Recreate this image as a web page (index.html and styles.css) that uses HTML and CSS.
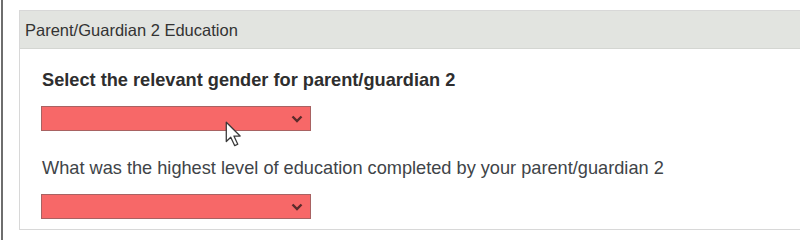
FILE: index.html
```html
<!DOCTYPE html>
<html lang="en">
<head>
  <meta charset="UTF-8">
  <title>Parent/Guardian 2 Education</title>
  <link rel="stylesheet" href="styles.css">
</head>
<body>
  <div class="frame">
    <div class="panel">
      <div class="panel-heading">Parent/Guardian 2 Education</div>
      <div class="panel-body">
        <!-- gender question -->
        <div class="question">
          <label class="question-label bold">Select the relevant gender for parent/guardian 2</label>
          <div class="select">
            <svg class="chevron" width="12" height="8" viewBox="0 0 12 8"><path d="M1.5 1.5 L6 6 L10.5 1.5" fill="none" stroke="#5b2b2b" stroke-width="2.4"/></svg>
          </div>
        </div>

        <!-- education question -->
        <div class="question">
          <label class="question-label">What was the highest level of education completed by your parent/guardian 2</label>
          <div class="select">
            <svg class="chevron" width="12" height="8" viewBox="0 0 12 8"><path d="M1.5 1.5 L6 6 L10.5 1.5" fill="none" stroke="#5b2b2b" stroke-width="2.4"/></svg>
          </div>
        </div>
      </div>
    </div>
  </div>

  <!-- mouse pointer captured in the screenshot -->
  <svg class="cursor" width="19" height="27" viewBox="0 0 16 23">
    <path d="M1 1 L1 17.5 L4.8 13.8 L8.2 21 L10.8 19.8 L7.5 12.8 L12.8 12.8 Z" fill="#fff" stroke="#3a3a3a" stroke-width="1.1" stroke-linejoin="round"/>
  </svg>
</body>
</html>
```

FILE: styles.css
```css
body {
  margin: 0;
  background: #fff;
  font-family: "Liberation Sans", Arial, sans-serif;
  color: #333;
  overflow: hidden;
}

.frame {
  margin-left: 1px;
  border-left: 2px solid #6e6e6e;
  height: 240px;
  padding: 10px 0 0 16px;
  box-sizing: border-box;
}

.panel {
  border: 1px solid #d8d8d8;
  border-right: none;
  margin-right: -20px;
  height: 220px;
  box-sizing: border-box;
}

.panel-heading {
  height: 37px;
  line-height: 38px;
  background: #e2e4e0;
  border-bottom: 1px solid #d4d6d2;
  padding-left: 5px;
  font-size: 16.5px;
  color: #333;
}

.panel-body {
  padding: 21px 22px 0 22px;
}

.question {
  display: flex;
  flex-direction: column;
  align-items: flex-start;
  gap: 15px;
  margin-bottom: 27px;
}

.question-label {
  font-size: 18.2px;
  line-height: 21px;
  color: #404448;
}

.question-label.bold {
  font-weight: bold;
  color: #2e2e2e;
}

.select {
  width: 270px;
  height: 25px;
  margin-left: -1px;
  box-sizing: border-box;
  background: #f76868;
  border: 1px solid #a86262;
  display: flex;
  align-items: center;
  justify-content: flex-end;
  padding-right: 7px;
}

.cursor {
  position: absolute;
  left: 225px;
  top: 121px;
}
```
